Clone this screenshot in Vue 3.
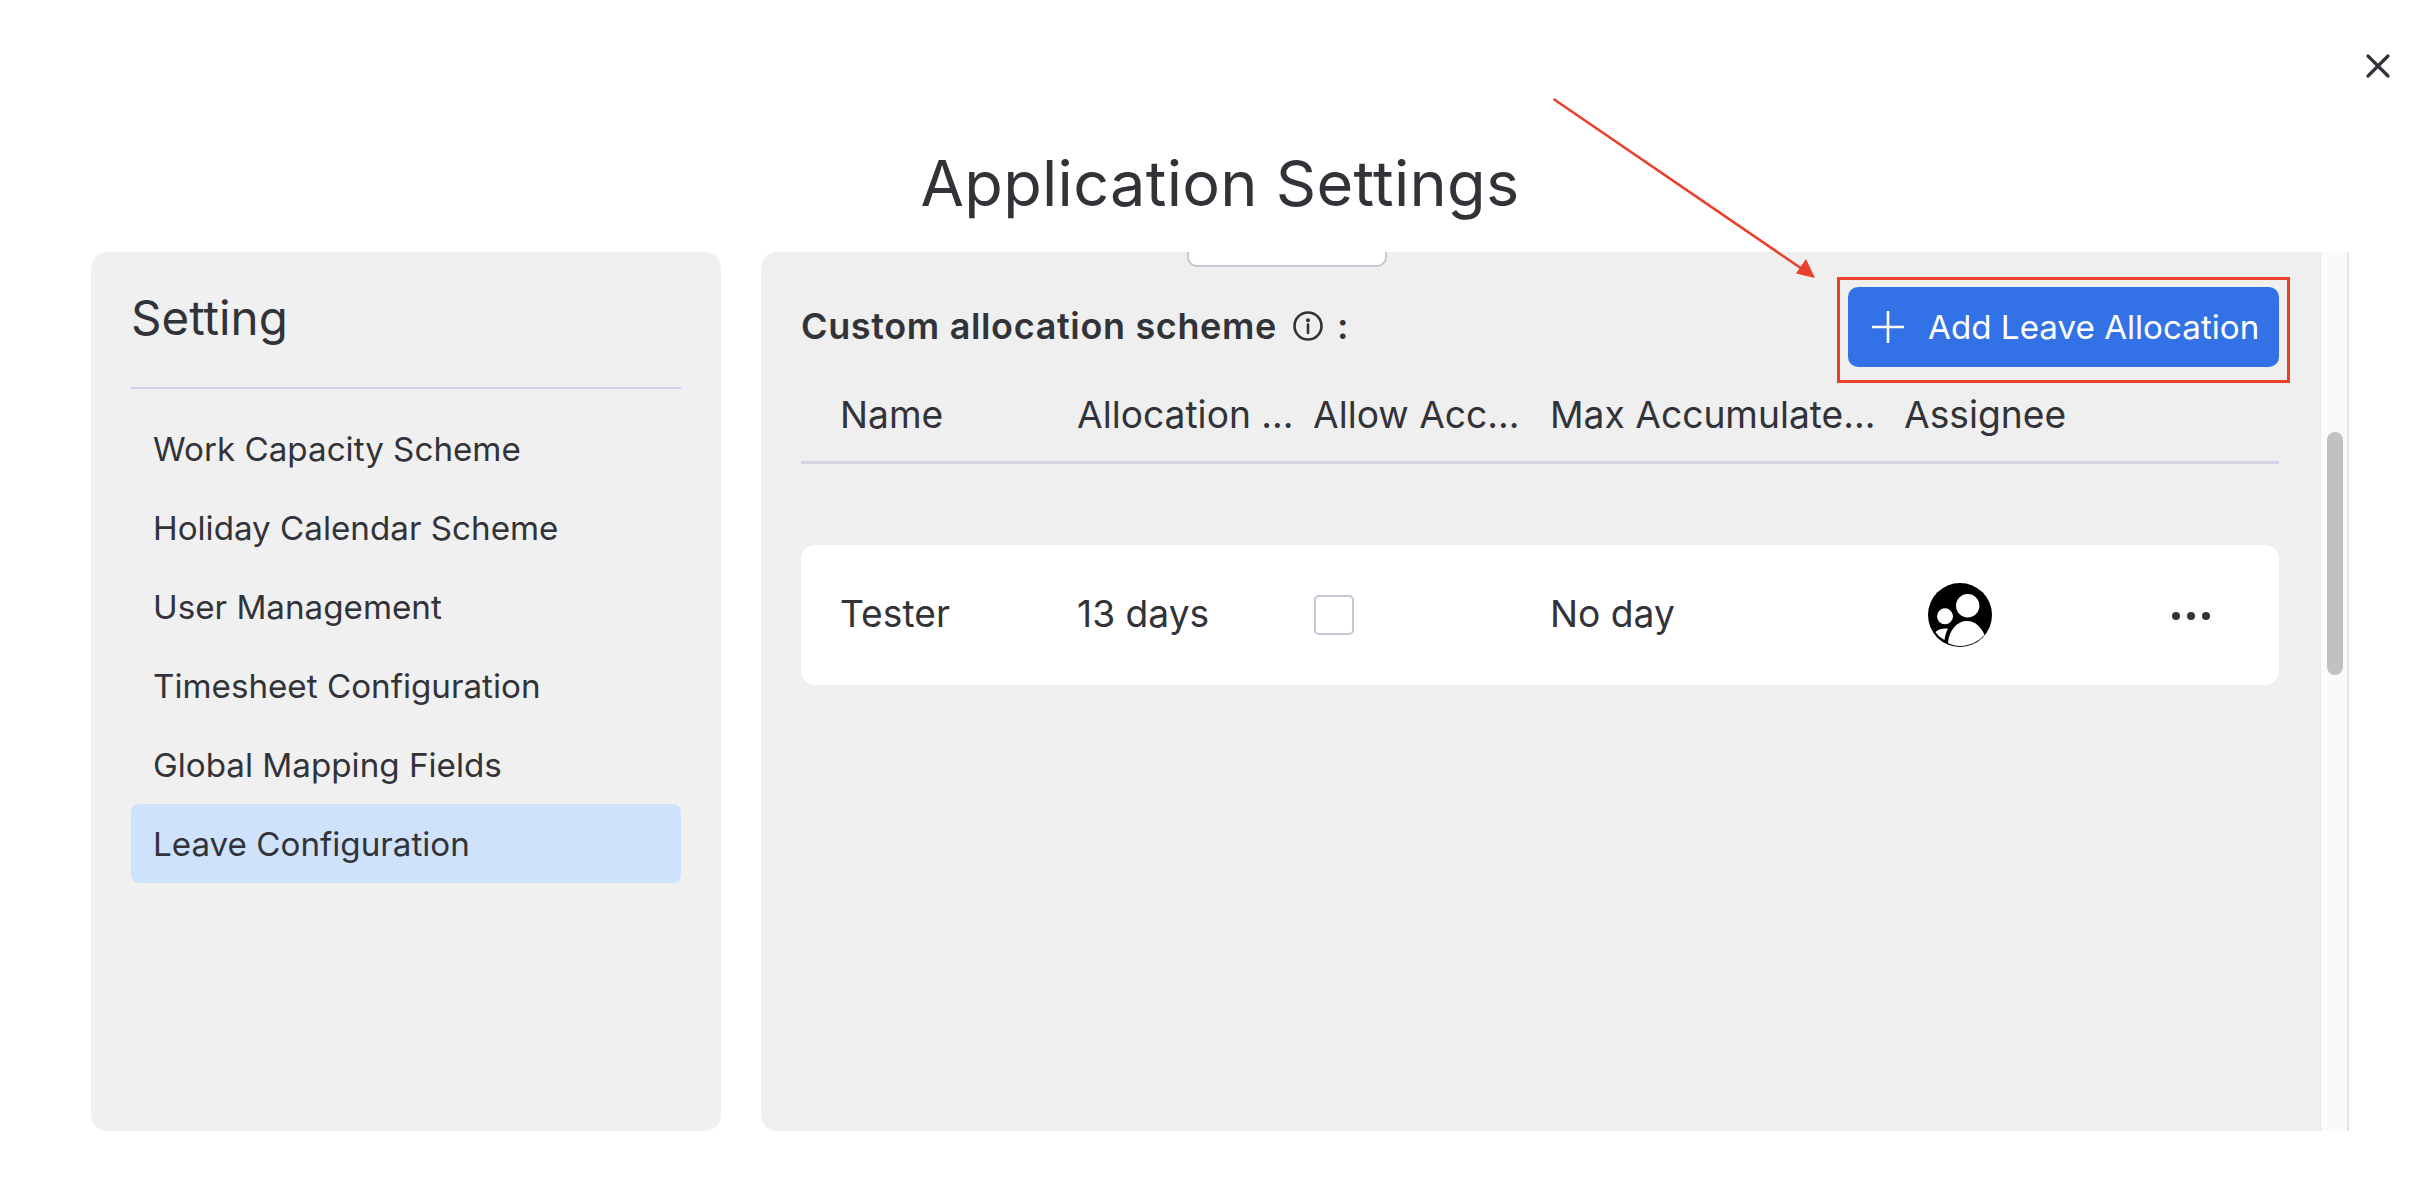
<script setup>
const navItems = [
  { label: 'Work Capacity Scheme' },
  { label: 'Holiday Calendar Scheme' },
  { label: 'User Management' },
  { label: 'Timesheet Configuration' },
  { label: 'Global Mapping Fields' },
  { label: 'Leave Configuration', active: true },
]
const columns = ['Name', 'Allocation ...', 'Allow Acc...', 'Max Accumulate...', 'Assignee']
</script>

<template>
  <div class="page">
    <button class="close" aria-label="Close">
      <svg width="26" height="26" viewBox="0 0 26 26"><path d="M3 3 L23 23 M23 3 L3 23" stroke="#323338" stroke-width="3.2" stroke-linecap="round" fill="none"/></svg>
    </button>
    <h1 class="title">Application Settings</h1>
    <div class="panels">
      <aside class="side">
        <h2 class="side-title">Setting</h2>
        <nav class="nav">
          <div v-for="item in navItems" :key="item.label" class="nav-item" :class="{ active: item.active }">{{ item.label }}</div>
        </nav>
      </aside>
      <section class="main">
        <div class="content">
          <div class="tab"></div>
          <div class="head-row">
            <div class="scheme">
              <span class="scheme-title">Custom allocation scheme</span>
              <svg class="info" width="32" height="32" viewBox="0 0 32 32"><circle cx="16" cy="16" r="13.5" stroke="#323338" stroke-width="2.6" fill="none"/><circle cx="16" cy="10.2" r="2" fill="#323338"/><path d="M16 14.5 V23" stroke="#323338" stroke-width="2.6" stroke-linecap="round"/></svg>
              <span class="colon">:</span>
            </div>
            <button class="add">
              <svg width="32" height="32" viewBox="0 0 32 32"><path d="M16 1 V31 M1 16 H31" stroke="#fff" stroke-width="2.6" stroke-linecap="round"/></svg>
              <span>Add Leave Allocation</span>
            </button>
          </div>
          <div class="table-head">
            <div v-for="c in columns" :key="c" class="cell text">{{ c }}</div>
          </div>
          <div class="row">
            <div class="cell text">Tester</div>
            <div class="cell text">13 days</div>
            <div class="cell"><span class="check"></span></div>
            <div class="cell text">No day</div>
            <div class="cell avatar-cell">
              <svg width="64" height="64" viewBox="0 0 64 64">
                <circle cx="32" cy="32" r="32" fill="#000"/>
                <circle cx="39.7" cy="22.7" r="11.7" fill="#fff"/>
                <circle cx="17" cy="33.3" r="8" fill="#fff"/>
                <path d="M20 60 C21 46 30 38 39 38 C47 38 53 44 56.5 52 C50 59 41 63 32 63 C28 63 24 62 20 60 Z" fill="#fff"/>
                <path d="M7.5 49 C11 46 15 45.3 20 45.7 C18 49 17 53 16.5 57 C12.5 55 9.5 52 7.5 49 Z" fill="#fff"/>
              </svg>
            </div>
            <div class="dots"><i></i><i></i><i></i></div>
          </div>
        </div>
        <div class="track"><div class="thumb"></div></div>
      </section>
    </div>
    <div class="mark-box"></div>
    <svg class="arrow" width="2424" height="1194" viewBox="0 0 2424 1194">
      <path d="M1553.5 99 L1805 271" stroke="#e8412b" stroke-width="2.6" fill="none"/>
      <path d="M1815 278 L1796 273.5 L1806 259 Z" fill="#e8412b"/>
    </svg>
  </div>
</template>

<style>
html, body { margin: 0; background: #fff; }
</style>

<style scoped>
.page {
  position: relative;
  width: 2424px;
  height: 1194px;
  box-sizing: border-box;
  padding: 0 75px 63px 91px;
  display: flex;
  flex-direction: column;
  background: #fff;
  color: #323338;
  font-family: "Inter", "Liberation Sans", sans-serif;
  overflow: hidden;
}
.close {
  position: absolute;
  left: 2365px;
  top: 53px;
  width: 26px;
  height: 26px;
  padding: 0;
  border: 0;
  background: none;
  display: flex;
}
.title {
  margin: 0;
  height: 252px;
  box-sizing: border-box;
  padding-top: 142px;
  font-size: 63px;
  line-height: 82px;
  font-weight: 400;
  text-align: center;
  letter-spacing: 0.3px;
}
.panels {
  flex: 1;
  display: flex;
  gap: 40px;
  min-height: 0;
}
.side {
  width: 630px;
  background: #f0f0f0;
  border-radius: 16px;
  padding: 0 40px;
  box-sizing: border-box;
}
.side-title {
  margin: 0;
  height: 137px;
  box-sizing: border-box;
  padding-top: 36px;
  font-size: 47.5px;
  line-height: 60px;
  font-weight: 400;
  border-bottom: 2px solid #d0d4e4;
}
.nav { padding-top: 20px; }
.nav-item {
  height: 79px;
  line-height: 81px;
  padding-left: 22px;
  font-size: 33.2px;
  border-radius: 8px;
}
.nav-item.active { background: #cfe2fc; }
.main {
  flex: 1;
  display: flex;
  background: #efefef;
  border-radius: 16px 0 0 16px;
  overflow: hidden;
}
.content {
  flex: 1;
  padding: 0 41px 0 40px;
  min-width: 0;
}
.tab {
  width: 200px;
  height: 15px;
  margin-left: 386px;
  margin-bottom: 20px;
  box-sizing: border-box;
  background: #fff;
  border: 2px solid #c5c7d4;
  border-top: 0;
  border-radius: 0 0 10px 10px;
}
.head-row {
  height: 80px;
  display: flex;
  align-items: center;
  justify-content: space-between;
}
.scheme { display: flex; align-items: center; margin-bottom: 2px; }
.scheme-title { font-size: 36px; font-weight: 600; letter-spacing: 0.65px; }
.info { margin-left: 15px; }
.colon { margin-left: 13px; font-size: 36px; font-weight: 600; }
.add {
  width: 431px;
  height: 80px;
  box-sizing: border-box;
  display: flex;
  align-items: center;
  gap: 24px;
  padding: 0 0 0 24px;
  border: 0;
  border-radius: 10px;
  background: #3272e6;
  color: #fff;
  font-family: inherit;
  font-size: 33.2px;
}
.table-head, .row {
  display: grid;
  grid-template-columns: 237px 236px 237px 354px 1fr;
  padding-left: 40px;
  align-items: center;
}
.table-head {
  height: 97px;
  font-size: 37.2px;
  border-bottom: 3px solid #d0d4e4;
  box-sizing: border-box;
}
.row {
  position: relative;
  height: 140px;
  margin-top: 81px;
  background: #fff;
  border-radius: 14px;
  font-size: 37.2px;
}
.cell { white-space: nowrap; }
.cell.text { margin-left: -1px; }
.row .cell.text { margin-bottom: 3px; }
.check {
  display: block;
  width: 40px;
  height: 40px;
  box-sizing: border-box;
  border: 2px solid #c5c7d4;
  border-radius: 5px;
  background: #fff;
}
.avatar-cell { display: flex; padding-left: 23px; }
.dots {
  position: absolute;
  left: 1371px;
  top: 67px;
  display: flex;
  gap: 7px;
}
.dots i {
  display: block;
  width: 8px;
  height: 8px;
  border-radius: 50%;
  background: #323338;
}
.track {
  width: 29px;
  box-sizing: border-box;
  background: #fafafa;
  border-left: 1px solid #eaeaea;
  border-right: 2px solid #e6e6e6;
  padding: 180px 4px 0 6px;
}
.thumb {
  height: 243px;
  background: #c1c1c1;
  border-radius: 8px;
}
.mark-box {
  position: absolute;
  left: 1837px;
  top: 277px;
  width: 453px;
  height: 106px;
  box-sizing: border-box;
  border: 3px solid #e8412b;
}
.arrow { position: absolute; left: 0; top: 0; pointer-events: none; }
</style>
